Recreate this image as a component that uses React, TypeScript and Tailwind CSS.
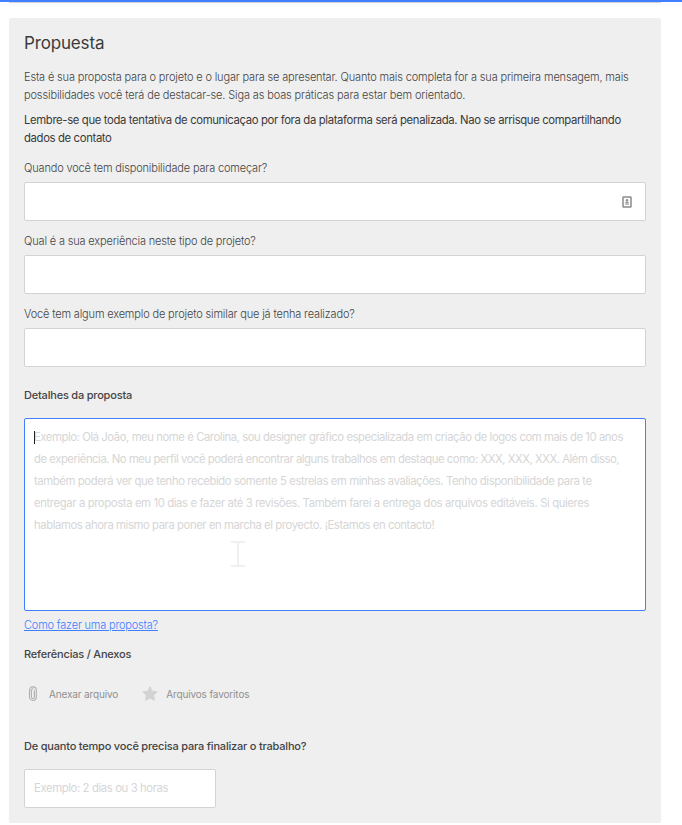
import { ReactNode } from 'react';

type TQuestionProps = {
  id: string;
  label: string;
  children?: ReactNode;
};

const questions = [
  { id: 'availability', label: 'Quando você tem disponibilidade para começar?' },
  { id: 'experience', label: 'Qual é a sua experiência neste tipo de projeto?' },
  { id: 'example', label: 'Você tem algum exemplo de projeto similar que já tenha realizado?' },
];

const detailsPlaceholder = [
  {
    text: 'Exemplo: Olá João, meu nome é Carolina, sou designer gráfico especializada em criação de logos com mais de 10 anos',
    tracking: 'tracking-[-0.43px]',
  },
  {
    text: 'de experiência. No meu perfil você poderá encontrar alguns trabalhos em destaque como: XXX, XXX, XXX. Além disso,',
    tracking: 'tracking-[-0.455px]',
  },
  {
    text: 'também poderá ver que tenho recebido somente 5 estrelas em minhas avaliações. Tenho disponibilidade para te',
    tracking: 'tracking-[-0.4px]',
  },
  {
    text: 'entregar a proposta em 10 dias e fazer até 3 revisões. Também farei a entrega dos arquivos editáveis. Si quieres',
    tracking: 'tracking-[-0.38px]',
  },
  {
    text: 'hablamos ahora mismo para poner en marcha el proyecto. ¡Estamos en contacto!',
    tracking: 'tracking-[-0.42px]',
  },
];

const ContactIcon = () => (
  <svg width="10" height="12" viewBox="0 0 10 12" fill="none">
    <rect x="1" y="1" width="8" height="10" rx="0.5" stroke="#8b8b8b" strokeWidth="1.5" />
    <circle cx="5" cy="4.3" r="1.2" fill="#8b8b8b" />
    <path d="M3.3 7.2c0-1.8 3.4-1.8 3.4 0zM3.2 8.5h3.6" fill="#8b8b8b" stroke="#a5a5a5" strokeWidth="0.8" />
  </svg>
);

const ClipIcon = () => (
  <svg width="10" height="16" viewBox="0 0 10 16" fill="none" stroke="#b0b0b0" strokeWidth="1.1" strokeLinecap="round">
    <path d="M3.4 4.5V11a1.5 1.5 0 0 0 3 0V4.5" />
    <path d="M3.4 4.5a1.5 1.5 0 0 1 1.5-1.6M8.3 4.5V11a3.4 3.4 0 0 1-6.8 0V4.3a3.4 3.4 0 0 1 6.8 0" />
  </svg>
);

const StarIcon = () => (
  <svg width="17" height="16" viewBox="0 0 17 16" fill="#d3d3d3">
    <path
      d="M8 .8l2.2 4.4 5 .7-3.6 3.5.8 4.9L8 12l-4.4 2.3.8-4.9L.8 5.9l5-.7z"
      stroke="#d3d3d3"
      strokeLinejoin="round"
    />
  </svg>
);

const TextCursor = () => (
  <svg className="absolute top-[122px] left-[206px]" width="15" height="26" viewBox="0 0 15 26" fill="#f0f0f0">
    <path d="M0 0h6l1 .6L8 0h6v2H8.5l-.5.7v20.6l.5.7H14v2H8l-1-.6-1 .6H0v-2h5.5l.5-.7V2.7L5.5 2H0z" />
  </svg>
);

const Question = ({ id, label, children }: TQuestionProps) => (
  <div className="mt-[11px]">
    <label htmlFor={id} className="block leading-[18px]">
      {label}
    </label>
    <div className="mt-[5px] flex h-[39px] items-center rounded-xs border border-[#d3d3d3] bg-white pr-[13px]">
      <input id={id} type="text" className="h-full min-w-0 flex-1 px-[9px] outline-none" />
      {children}
    </div>
  </div>
);

const App = () => {
  return (
    <main className="h-[825px] w-[682px] overflow-hidden bg-white font-['Inter',sans-serif] text-[11px] font-light tracking-[-0.16px] text-[#444]">
      <div className="h-[2px] bg-[#4080ff]" />
      <div className="ml-[9px] h-px w-[652px] bg-[#d3d3d3]" />

      <form className="mt-[15px] ml-[9px] h-[805px] w-[652px] rounded-xs bg-[#efefef] px-[15px] pt-[13px]">
        <h1 className="text-[17px] leading-6 font-normal text-[#3b3b3b]">Propuesta</h1>
        <p className="mt-[13px] leading-[18px] whitespace-nowrap">
          <span className="block">
            Esta é sua proposta para o projeto e o lugar para se apresentar. Quanto mais completa for a sua primeira
            mensagem, mais
          </span>
          <span className="block tracking-[-0.135px]">
            possibilidades você terá de destacar-se. Siga as boas práticas para estar bem orientado.
          </span>
        </p>
        <p className="mt-[7px] text-[11.3px] leading-[18px] font-normal tracking-[-0.35px] whitespace-nowrap text-[#3a3a3a]">
          <span className="block">
            Lembre-se que toda tentativa de comunicaçao por fora da plataforma será penalizada. Nao se arrisque
            compartilhando
          </span>
          <span className="block">dados de contato</span>
        </p>

        <div className="mt-3">
          {questions.map((item) => (
            <Question key={item.id} id={item.id} label={item.label}>
              {item.id === 'availability' && <ContactIcon />}
            </Question>
          ))}
        </div>

        <h2 className="mt-[19px] leading-[18px] font-medium tracking-[-0.2px]">Detalhes da proposta</h2>
        {/* focused editor, the placeholder sits behind the caret */}
        <div className="relative mt-[14px] h-[193px] rounded-xs border border-[#4080ff] bg-white px-[9px] pt-[7px] text-[11.3px] leading-[22px] font-normal whitespace-nowrap text-[#d6d6d6]">
          {detailsPlaceholder.map((line) => (
            <p key={line.text} className={line.tracking}>
              {line.text}
            </p>
          ))}
          <span className="absolute top-[12px] left-[9px] h-[13px] w-px bg-[#222]" />
          <TextCursor />
        </div>
        <a href="#ajuda" className="mt-[5px] block w-fit leading-[18px] tracking-[-0.19px] text-[#4080ff] underline">
          Como fazer uma proposta?
        </a>

        <h2 className="mt-[11px] leading-[18px] font-medium tracking-[-0.2px]">Referências / Anexos</h2>
        <div className="mt-[22px] flex h-[18px] items-center pl-1 text-[10px] font-normal tracking-[-0.14px] text-[#8f8f8f]">
          <button type="button" className="flex items-center">
            <ClipIcon />
            <span className="ml-[11px]">Anexar arquivo</span>
          </button>
          <button type="button" className="ml-6 flex items-center">
            <StarIcon />
            <span className="ml-[7px]">Arquivos favoritos</span>
          </button>
        </div>

        <h2 className="mt-[34px] leading-[18px] font-medium tracking-[-0.2px]">
          De quanto tempo você precisa para finalizar o trabalho?
        </h2>
        <input
          type="text"
          placeholder="Exemplo: 2 dias ou 3 horas"
          className="mt-[14px] block h-[39px] w-[192px] rounded-xs border border-[#d3d3d3] bg-white px-[9px] pb-[2px] text-[11.3px] font-normal tracking-[-0.38px] outline-none placeholder:text-[#d6d6d6]"
        />
      </form>
    </main>
  );
};

export default App;
